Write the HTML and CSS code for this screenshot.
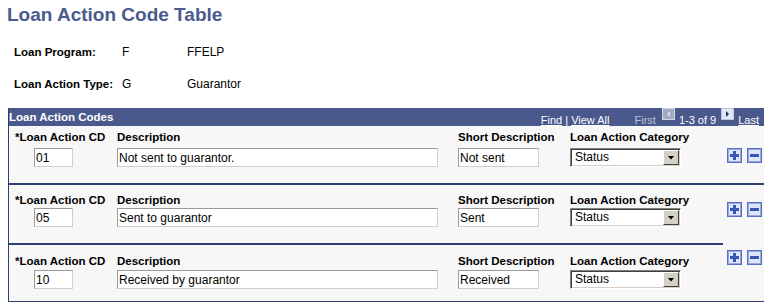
FILE: index.html
```html
<!DOCTYPE html>
<html lang="en">
<head>
    <meta charset="UTF-8">
    <title>Loan Action Code Table</title>
    <link rel="stylesheet" href="styles.css">
</head>
<body>
    <h1 class="page-title">Loan Action Code Table</h1>

    <div class="info">
        <div class="info-row">
            <span class="info-label">Loan Program:</span>
            <span class="info-code">F</span>
            <span>FFELP</span>
        </div>
        <div class="info-row">
            <span class="info-label">Loan Action Type:</span>
            <span class="info-code">G</span>
            <span>Guarantor</span>
        </div>
    </div>

    <div class="grid">
        <div class="grid-head">
            <span class="grid-title">Loan Action Codes</span>
            <div class="grid-nav">
                <span class="nav-links"><a href="#">Find</a> | <a href="#">View All</a></span>
                <span class="nav-first">First</span>
                <svg class="nav-arrow" width="13" height="12" viewBox="0 0 13 12">
                    <rect x="0.5" y="0.5" width="12" height="11" fill="#a2aac6" stroke="#d5d9e6"/>
                    <path d="M8 3v6L5 6z" fill="#dcdfe8"/>
                </svg>
                <span class="nav-count">1-3 of 9</span>
                <svg class="nav-arrow nav-next" width="13" height="12" viewBox="0 0 13 12">
                    <rect x="0.5" y="0.5" width="12" height="11" fill="#e2e7f6" stroke="#bcc5e3"/>
                    <path d="M5 3v6l3-3z" fill="#1f2f6e"/>
                </svg>
                <a href="#" class="nav-last">Last</a>
            </div>
        </div>

        <!-- ligne 1 -->
        <div class="row row-1">
            <div class="fields">
                <div class="col col-cd">
                    <span class="lbl">*Loan Action CD</span>
                    <input class="txt txt-cd" value="01">
                </div>
                <div class="col col-desc">
                    <span class="lbl">Description</span>
                    <input class="txt txt-desc" value="Not sent to guarantor.">
                </div>
                <div class="col col-short">
                    <span class="lbl">Short Description</span>
                    <input class="txt txt-short" value="Not sent">
                </div>
                <div class="col col-cat">
                    <span class="lbl">Loan Action Category</span>
                    <div class="select"><span class="select-text">Status</span><span class="select-btn"></span></div>
                </div>
            </div>
            <div class="actions">
                <svg class="row-btn" width="15" height="15" viewBox="0 0 15 15">
                    <rect x="0.5" y="0.5" width="14" height="14" fill="#dde5f8" stroke="#566fc3"/>
                    <rect x="1.5" y="1.5" width="12" height="12" fill="none" stroke="#98a9e0"/>
                    <rect x="3" y="6" width="9" height="3" fill="#3b55b3"/>
                    <rect x="6" y="3" width="3" height="9" fill="#3b55b3"/>
                </svg>
                <svg class="row-btn" width="15" height="15" viewBox="0 0 15 15">
                    <rect x="0.5" y="0.5" width="14" height="14" fill="#dde5f8" stroke="#566fc3"/>
                    <rect x="1.5" y="1.5" width="12" height="12" fill="none" stroke="#98a9e0"/>
                    <rect x="3" y="6" width="9" height="3" fill="#3b55b3"/>
                </svg>
            </div>
        </div>

        <!-- ligne 2 -->
        <div class="row row-2">
            <div class="fields">
                <div class="col col-cd">
                    <span class="lbl">*Loan Action CD</span>
                    <input class="txt txt-cd" value="05">
                </div>
                <div class="col col-desc">
                    <span class="lbl">Description</span>
                    <input class="txt txt-desc" value="Sent to guarantor">
                </div>
                <div class="col col-short">
                    <span class="lbl">Short Description</span>
                    <input class="txt txt-short" value="Sent">
                </div>
                <div class="col col-cat">
                    <span class="lbl">Loan Action Category</span>
                    <div class="select"><span class="select-text">Status</span><span class="select-btn"></span></div>
                </div>
            </div>
            <div class="actions">
                <svg class="row-btn" width="15" height="15" viewBox="0 0 15 15">
                    <rect x="0.5" y="0.5" width="14" height="14" fill="#dde5f8" stroke="#566fc3"/>
                    <rect x="1.5" y="1.5" width="12" height="12" fill="none" stroke="#98a9e0"/>
                    <rect x="3" y="6" width="9" height="3" fill="#3b55b3"/>
                    <rect x="6" y="3" width="3" height="9" fill="#3b55b3"/>
                </svg>
                <svg class="row-btn" width="15" height="15" viewBox="0 0 15 15">
                    <rect x="0.5" y="0.5" width="14" height="14" fill="#dde5f8" stroke="#566fc3"/>
                    <rect x="1.5" y="1.5" width="12" height="12" fill="none" stroke="#98a9e0"/>
                    <rect x="3" y="6" width="9" height="3" fill="#3b55b3"/>
                </svg>
            </div>
        </div>

        <!-- ligne 3 -->
        <div class="row row-3">
            <div class="fields">
                <div class="col col-cd">
                    <span class="lbl">*Loan Action CD</span>
                    <input class="txt txt-cd" value="10">
                </div>
                <div class="col col-desc">
                    <span class="lbl">Description</span>
                    <input class="txt txt-desc" value="Received by guarantor">
                </div>
                <div class="col col-short">
                    <span class="lbl">Short Description</span>
                    <input class="txt txt-short" value="Received">
                </div>
                <div class="col col-cat">
                    <span class="lbl">Loan Action Category</span>
                    <div class="select"><span class="select-text">Status</span><span class="select-btn"></span></div>
                </div>
            </div>
            <div class="actions">
                <svg class="row-btn" width="15" height="15" viewBox="0 0 15 15">
                    <rect x="0.5" y="0.5" width="14" height="14" fill="#dde5f8" stroke="#566fc3"/>
                    <rect x="1.5" y="1.5" width="12" height="12" fill="none" stroke="#98a9e0"/>
                    <rect x="3" y="6" width="9" height="3" fill="#3b55b3"/>
                    <rect x="6" y="3" width="3" height="9" fill="#3b55b3"/>
                </svg>
                <svg class="row-btn" width="15" height="15" viewBox="0 0 15 15">
                    <rect x="0.5" y="0.5" width="14" height="14" fill="#dde5f8" stroke="#566fc3"/>
                    <rect x="1.5" y="1.5" width="12" height="12" fill="none" stroke="#98a9e0"/>
                    <rect x="3" y="6" width="9" height="3" fill="#3b55b3"/>
                </svg>
            </div>
        </div>
    </div>
</body>
</html>
```

FILE: styles.css
```css
body {
    margin: 0;
    font-family: 'Liberation Sans', Arial, sans-serif;
    color: #000;
    background-color: #fff;
}

.page-title {
    margin: 0;
    padding: 4px 0 0 7px;
    font-size: 19px;
    line-height: 22px;
    font-weight: bold;
    color: #4b5a8c;
}

.info {
    margin: 19px 0 0 14px;
    display: flex;
    flex-direction: column;
    gap: 18px;
}

.info-row {
    display: flex;
    font-size: 12px;
    line-height: 14px;
}

.info-label {
    width: 108px;
    font-size: 11.5px;
    font-weight: bold;
}

.info-code {
    width: 65px;
}

/* grille */
.grid {
    margin: 17px 0 0 8px;
    width: 755px;
    border-left: 1px solid #2c3f70;
    border-bottom: 1px solid #2c3f70;
    background-color: #f7f7f7;
}

.grid-head {
    height: 18px;
    display: flex;
    justify-content: space-between;
    align-items: flex-end;
    background-color: #4a598c;
    color: #fff;
}

.grid-title {
    font-size: 11.5px;
    font-weight: bold;
    line-height: 14px;
    padding-bottom: 2px;
}

.grid-nav {
    display: flex;
    align-items: flex-end;
    font-size: 11px;
    line-height: 12px;
    padding-right: 5px;
}

.grid-nav a {
    color: #fff;
    text-decoration: underline;
}

.nav-first {
    margin-left: 25px;
    color: #bcc2da;
}

.nav-arrow {
    display: block;
    margin-left: 6px;
    margin-bottom: 6px;
}

.nav-count {
    margin-left: 4px;
}

.nav-next {
    margin-left: 5px;
}

.nav-last {
    margin-left: 4px;
}

/* lignes */
.row {
    display: flex;
}

.fields {
    width: 714px;
    display: flex;
    padding-left: 6px;
    box-sizing: border-box;
}

.col {
    display: flex;
    flex-direction: column;
}

.col-cd { width: 102px; }
.col-desc { width: 341px; }
.col-short { width: 112px; }
.col-cat { width: 150px; }

.lbl {
    font-size: 11.5px;
    font-weight: bold;
    line-height: 14px;
    white-space: nowrap;
}

.txt {
    box-sizing: border-box;
    height: 19px;
    margin: 0;
    padding: 0 0 0 1px;
    border: 1px solid;
    border-color: #9a9a9a #cfcfcf #cfcfcf #9a9a9a;
    background-color: #fff;
    font-family: 'Liberation Sans', Arial, sans-serif;
    font-size: 12px;
    line-height: 17px;
    color: #000;
    outline: none;
}

.txt-cd {
    width: 39px;
    margin-left: 19px;
}

.txt-desc { width: 321px; }
.txt-short { width: 81px; }

.select {
    box-sizing: border-box;
    width: 111px;
    height: 19px;
    display: flex;
    padding: 1px;
    border: 1px solid;
    border-color: #808080 #fff #fff #808080;
    box-shadow: inset 1px 1px #404040, inset -1px -1px #d4d0c8;
    background-color: #fff;
}

.select-text {
    padding-left: 3px;
    font-size: 12px;
    line-height: 15px;
}

.select-btn {
    margin-left: auto;
    width: 16px;
    box-sizing: border-box;
    border: 1px solid;
    border-color: #fff #404040 #404040 #fff;
    background-color: #d4d0c8;
    display: flex;
    align-items: center;
    justify-content: center;
}

.select-btn::after {
    content: "";
    width: 7px;
    height: 4px;
    background-color: #000;
    clip-path: polygon(0 0, 100% 0, 50% 100%);
}

.actions {
    width: 40px;
    display: flex;
    align-items: flex-start;
    gap: 5px;
    padding-left: 4px;
    box-sizing: border-box;
}

.row-btn {
    display: block;
}

.row-1 .fields { padding-top: 4px; padding-bottom: 16px; }
.row-1 .col { gap: 4px; }
.row-1 { border-bottom: 2px solid #2c3f70; }
.row-1 .actions { padding-top: 22px; }

.row-2 .fields { padding-top: 8px; padding-bottom: 16px; border-bottom: 2px solid #2c3f70; }
.row-2 .col { gap: 1px; }
.row-2 .actions { padding-top: 17px; }

.row-3 .fields { padding-top: 9px; padding-bottom: 12px; }
.row-3 .col { gap: 2px; }
.row-3 .actions { padding-top: 5px; }
```
